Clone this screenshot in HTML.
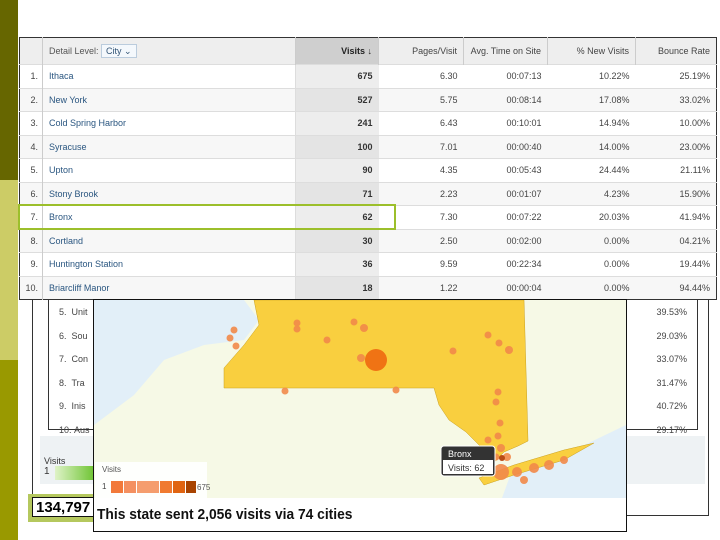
<!DOCTYPE html>
<html><head><style>
body{margin:0;width:720px;height:540px;position:relative;overflow:hidden;background:#fff;font-family:"Liberation Sans",sans-serif}
.a{position:absolute}
table{border-collapse:collapse;font-size:9px;table-layout:fixed}
#t{left:19px;top:37px;width:697px;border:1px solid #333;background:#fff}
#t td{height:22.5px;border-top:1px solid #ddd;padding:0 6px;color:#444;text-align:right;white-space:nowrap;overflow:hidden}
#t td.n{text-align:right;padding:0 4px;border-right:1px solid #ccc}
#t td.c{text-align:left;color:#2a5680;border-right:1px solid #ddd}
#t td.v{background:#ededed;font-weight:bold;color:#333}
#t tr:nth-child(odd) td.v{background:#e4e4e4}
#t tr.h td{height:26px;background:#eee;color:#444;border-top:none;border-right:1px solid #ccc}
#t tr.h td.v{background:#cfcfcf;color:#222}
</style></head><body>
<div class="a" style="left:0;top:0;width:18px;height:180px;background:#666600"></div>
<div class="a" style="left:0;top:180px;width:18px;height:180px;background:#cccc66"></div>
<div class="a" style="left:0;top:360px;width:18px;height:180px;background:#999900"></div>

<!-- back panel -->
<div class="a" style="left:32px;top:280px;width:675px;height:234px;border:1px solid #333;background:#fff"></div>
<div class="a" style="left:48px;top:280px;width:648px;height:148px;border:1px solid #333;background:#fff;font-size:9px;color:#444">
<div style="position:absolute;left:10px;top:20px;line-height:23.5px">5.&nbsp;&nbsp;Unit<br>6.&nbsp;&nbsp;Sou<br>7.&nbsp;&nbsp;Con<br>8.&nbsp;&nbsp;Tra<br>9.&nbsp;&nbsp;Inis<br>10.&nbsp;Aus</div>
<div style="position:absolute;right:10px;top:20px;line-height:23.5px;text-align:right">39.53%<br>29.03%<br>33.07%<br>31.47%<br>40.72%<br>29.17%</div>
</div>
<div class="a" style="left:40px;top:436px;width:665px;height:48px;background:#eef2f4"></div>
<div class="a" style="left:44px;top:456px;font-size:9px;color:#333">Visits<br><span style="font-size:10px">1</span></div>
<div class="a" style="left:55px;top:466px;width:40px;height:14px;background:linear-gradient(90deg,#dff3c8,#6cc330)"></div>
<div class="a" style="left:28px;top:494px;width:66px;height:28px;background:#b5c85e"></div>
<div class="a" style="left:32px;top:497px;width:62px;height:20px;background:#fff;border:1px solid #111;font-size:15px;font-weight:bold;line-height:20px;padding-left:3px;box-sizing:border-box">134,797</div>

<!-- table -->
<table id="t" class="a">
<colgroup><col style="width:23px"><col style="width:253px"><col style="width:83px"><col style="width:85px"><col style="width:84px"><col style="width:88px"><col style="width:81px"></colgroup>
<tr class="h"><td class="n"></td><td class="c" style="color:#555">Detail Level: <span style="border:1px solid #bcd;background:#f4f8fc;padding:1px 4px;color:#357">City ⌄</span></td><td class="v">Visits ↓</td><td>Pages/Visit</td><td>Avg. Time on Site</td><td>% New Visits</td><td style="border-right:none">Bounce Rate</td></tr>
<tr><td class="n">1.</td><td class="c">Ithaca</td><td class="v">675</td><td>6.30</td><td>00:07:13</td><td>10.22%</td><td>25.19%</td></tr>
<tr style="background:#f7f7f7"><td class="n">2.</td><td class="c">New York</td><td class="v">527</td><td>5.75</td><td>00:08:14</td><td>17.08%</td><td>33.02%</td></tr>
<tr><td class="n">3.</td><td class="c">Cold Spring Harbor</td><td class="v">241</td><td>6.43</td><td>00:10:01</td><td>14.94%</td><td>10.00%</td></tr>
<tr style="background:#f7f7f7"><td class="n">4.</td><td class="c">Syracuse</td><td class="v">100</td><td>7.01</td><td>00:00:40</td><td>14.00%</td><td>23.00%</td></tr>
<tr><td class="n">5.</td><td class="c">Upton</td><td class="v">90</td><td>4.35</td><td>00:05:43</td><td>24.44%</td><td>21.11%</td></tr>
<tr style="background:#f7f7f7"><td class="n">6.</td><td class="c">Stony Brook</td><td class="v">71</td><td>2.23</td><td>00:01:07</td><td>4.23%</td><td>15.90%</td></tr>
<tr><td class="n">7.</td><td class="c">Bronx</td><td class="v">62</td><td>7.30</td><td>00:07:22</td><td>20.03%</td><td>41.94%</td></tr>
<tr style="background:#f7f7f7"><td class="n">8.</td><td class="c">Cortland</td><td class="v">30</td><td>2.50</td><td>00:02:00</td><td>0.00%</td><td>04.21%</td></tr>
<tr><td class="n">9.</td><td class="c">Huntington Station</td><td class="v">36</td><td>9.59</td><td>00:22:34</td><td>0.00%</td><td>19.44%</td></tr>
<tr style="background:#f7f7f7"><td class="n">10.</td><td class="c">Briarcliff Manor</td><td class="v">18</td><td>1.22</td><td>00:00:04</td><td>0.00%</td><td>94.44%</td></tr>
</table>
<div class="a" style="left:18px;top:204px;width:374px;height:22px;border:2px solid #9cbf2b"></div>

<!-- map -->
<div class="a" style="left:93px;top:299px;width:532px;height:231px;border:1px solid #111;background:#fff;overflow:hidden">
<svg width="532" height="198" style="position:absolute;left:0;top:0">
<rect width="532" height="198" fill="#f6f9e6"/>
<path d="M0 0 L150 0 L165 20 L150 40 L110 45 L70 60 L40 95 L0 125Z" fill="#e2eff8"/>
<path d="M408 198 L420 165 L480 150 L532 125 L532 198Z" fill="#e2eff8"/>
<path d="M160 0 L430 0 L434 141 L424 146 L410 152 L395 168 L385 165 L390 150 L372 132 L355 120 L345 105 L340 88 L130 88 L130 68 L150 45 L165 25 L160 0Z" fill="#f9cf3f" stroke="#c9a020" stroke-width="0.5"/>
<path d="M385 178 L420 165 L470 150 L500 143 L470 160 L420 175 L390 185Z" fill="#f9cf3f" stroke="#c9a020" stroke-width="0.5"/>
<g fill="#f28a4a" opacity="0.9">
<circle cx="282" cy="60" r="11" fill="#f06a10"/>
<circle cx="140" cy="30" r="3.5"/><circle cx="142" cy="46" r="3.5"/><circle cx="136" cy="38" r="3.5"/>
<circle cx="203" cy="23" r="3.5"/><circle cx="203" cy="29" r="3.5"/><circle cx="260" cy="22" r="3.5"/><circle cx="270" cy="28" r="4"/>
<circle cx="233" cy="40" r="3.5"/><circle cx="267" cy="58" r="4"/><circle cx="302" cy="90" r="3.5"/><circle cx="191" cy="91" r="3.5"/>
<circle cx="359" cy="51" r="3.5"/><circle cx="394" cy="35" r="3.5"/><circle cx="405" cy="43" r="3.5"/><circle cx="415" cy="50" r="4"/>
<circle cx="404" cy="92" r="3.5"/><circle cx="402" cy="102" r="3.5"/><circle cx="406" cy="123" r="3.5"/><circle cx="404" cy="136" r="3.5"/>
<circle cx="394" cy="140" r="3.5"/><circle cx="407" cy="148" r="4"/><circle cx="413" cy="157" r="4"/><circle cx="402" cy="157" r="3.5"/>
<circle cx="407" cy="172" r="8"/><circle cx="423" cy="172" r="5"/><circle cx="440" cy="168" r="5"/><circle cx="455" cy="165" r="5"/><circle cx="470" cy="160" r="4"/><circle cx="430" cy="180" r="4"/>
<circle cx="408" cy="158" r="3" fill="#b33a00"/>
</g>
<rect x="1" y="162" width="112" height="36" fill="#fff" opacity="0.9"/>
<text x="8" y="172" font-size="8" fill="#555" font-family="Liberation Sans">Visits</text>
<text x="8" y="189" font-size="8" fill="#444" font-family="Liberation Sans">1</text>
<rect x="17" y="181" width="12" height="12" fill="#f2793a"/><rect x="30" y="181" width="12" height="12" fill="#f49060"/><rect x="43" y="181" width="22" height="12" fill="#f59d6e"/><rect x="66" y="181" width="12" height="12" fill="#f07a30"/><rect x="79" y="181" width="12" height="12" fill="#e06410"/><rect x="92" y="181" width="10" height="12" fill="#a84300"/>
<text x="103" y="190" font-size="8" fill="#555" font-family="Liberation Sans">675</text>
<rect x="347" y="146" width="54" height="30" rx="3" fill="#333" stroke="#fff"/>
<rect x="349" y="160" width="50" height="14" fill="#fff"/>
<text x="354" y="157" font-size="9" fill="#fff" font-family="Liberation Sans">Bronx</text>
<text x="354" y="171" font-size="9" fill="#333" font-family="Liberation Sans">Visits: 62</text>
</svg>
<div style="position:absolute;left:3px;top:206px;font-size:15px;font-weight:bold;color:#111;transform:scaleX(0.92);transform-origin:left">This state sent 2,056 visits via 74 cities</div>
</div>
</body></html>
